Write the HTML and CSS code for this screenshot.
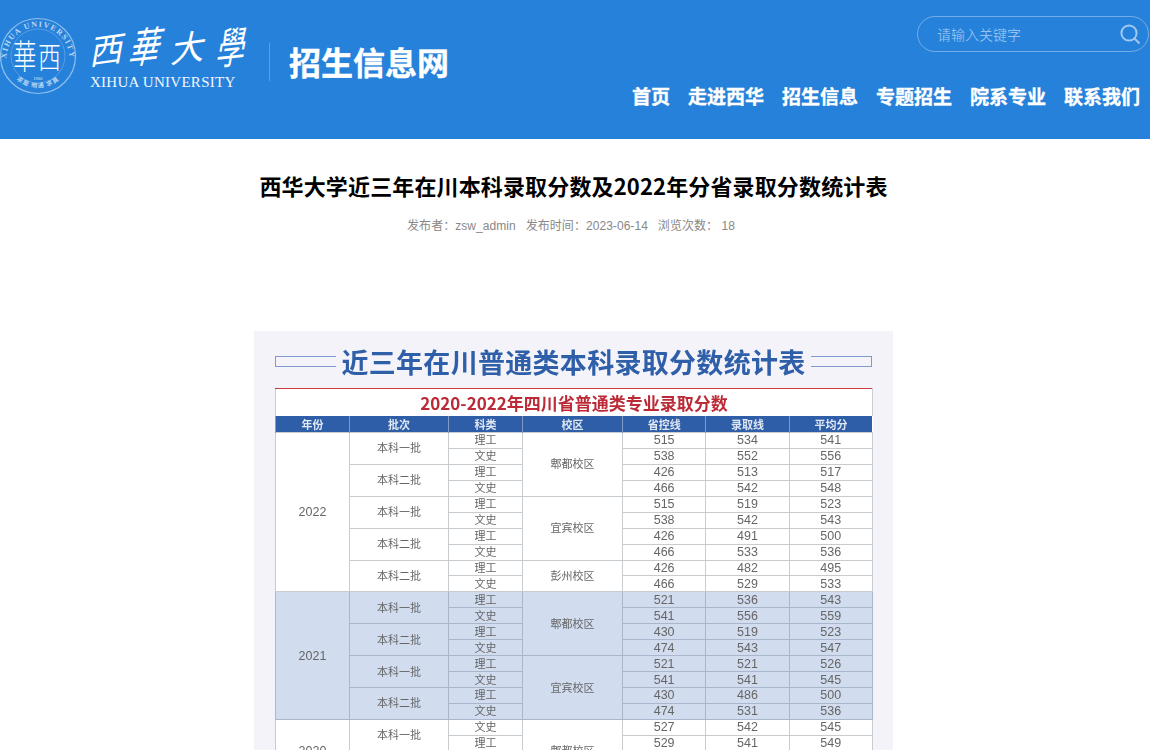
FILE: index.html
```html
<!DOCTYPE html>
<html lang="zh-CN">
<head>
    <meta charset="UTF-8">
    <meta name="viewport" content="width=device-width, initial-scale=1.0">
    <link rel="stylesheet" href="styles.css">
    <title>西华大学近三年在川本科录取分数及2022年分省录取分数统计表</title>
</head>
<body>

<header class="site-header">
    <div class="brand">
        <svg class="seal" width="80" height="80" viewBox="0 0 80 80">
            <defs>
                <path id="seal-top" d="M7 48 A31.5 31.5 0 1 1 69 48"></path>
                <path id="seal-bottom" d="M7 50 A33 33 0 0 0 69 50"></path>
            </defs>
            <circle class="seal-ring" cx="38" cy="40" r="37.5"></circle>
            <circle class="seal-ring thin" cx="38" cy="40" r="27"></circle>
            <text class="seal-name"><textPath href="#seal-top" startOffset="50%" text-anchor="middle">XIHUA UNIVERSITY</textPath></text>
            <text class="seal-motto"><textPath href="#seal-bottom" startOffset="50%" text-anchor="middle">求是 明通 求真</textPath></text>
            <text class="seal-char" transform="translate(13 53) scale(.9 1.3)">華</text>
            <text class="seal-char" transform="translate(38 52) scale(.88 1.15)">西</text>
            <text class="seal-year" x="38" y="64" text-anchor="middle">1960</text>
        </svg>
        <div class="school-name">
            <svg class="calligraphy" width="165" height="56" viewBox="0 0 165 56">
                <text transform="translate(-1 47) rotate(-8) skewX(-18)" font-size="34">西</text>
                <text transform="translate(37 46) rotate(-6) skewX(-22) scale(.9 1.2)" font-size="34">華</text>
                <text transform="translate(80 45) rotate(-8) skewX(-18)" font-size="34">大</text>
                <text transform="translate(125 47) rotate(-6) skewX(-16) scale(.85 1.25)" font-size="34">學</text>
            </svg>
            <div class="school-en">XIHUA UNIVERSITY</div>
        </div>
        <div class="site-name">招生信息网</div>
    </div>

    <div class="site-tools">
        <form class="search">
            <input type="text" placeholder="请输入关键字">
            <svg width="22" height="22" viewBox="0 0 22 22">
                <circle cx="10" cy="10" r="7.6"></circle>
                <path d="M15.5 15.5 L20.5 20.5"></path>
            </svg>
        </form>
        <nav class="main-nav">
            <a href="#">首页</a>
            <a href="#">走进西华</a>
            <a href="#">招生信息</a>
            <a href="#">专题招生</a>
            <a href="#">院系专业</a>
            <a href="#">联系我们</a>
        </nav>
    </div>
</header>

<main class="article">
    <h1>西华大学近三年在川本科录取分数及2022年分省录取分数统计表</h1>
    <p class="meta">
        <span>发布者：zsw_admin</span>
        <span>发布时间：2023-06-14</span>
        <span>浏览次数： 18</span>
    </p>

    <!-- the notice body is one big picture of a table, clipped by the window -->
    <figure class="score-sheet">
        <div class="sheet-heading">
            <i class="bracket"></i>
            <span>近三年在川普通类本科录取分数统计表</span>
            <i class="bracket right"></i>
        </div>
        <table>
            <colgroup>
                <col class="c-year"><col class="c-batch"><col class="c-type"><col class="c-campus">
                <col class="c-num"><col class="c-num"><col class="c-num">
            </colgroup>
            <thead>
                <tr class="sheet-title"><th colspan="7">2020-2022年四川省普通类专业录取分数</th></tr>
                <tr class="sheet-cols">
                    <th>年份</th><th>批次</th><th>科类</th><th>校区</th><th>省控线</th><th>录取线</th><th>平均分</th>
                </tr>
            </thead>
            <tbody>
                <tr><td class="year" rowspan="10">2022</td><td rowspan="2">本科一批</td><td>理工</td><td rowspan="4">郫都校区</td><td>515</td><td>534</td><td>541</td></tr>
                <tr><td>文史</td><td>538</td><td>552</td><td>556</td></tr>
                <tr><td rowspan="2">本科二批</td><td>理工</td><td>426</td><td>513</td><td>517</td></tr>
                <tr><td>文史</td><td>466</td><td>542</td><td>548</td></tr>
                <tr><td rowspan="2">本科一批</td><td>理工</td><td rowspan="4">宜宾校区</td><td>515</td><td>519</td><td>523</td></tr>
                <tr><td>文史</td><td>538</td><td>542</td><td>543</td></tr>
                <tr><td rowspan="2">本科二批</td><td>理工</td><td>426</td><td>491</td><td>500</td></tr>
                <tr><td>文史</td><td>466</td><td>533</td><td>536</td></tr>
                <tr><td rowspan="2">本科二批</td><td>理工</td><td rowspan="2">彭州校区</td><td>426</td><td>482</td><td>495</td></tr>
                <tr><td>文史</td><td>466</td><td>529</td><td>533</td></tr>
            </tbody>
            <tbody class="shaded">
                <tr><td class="year" rowspan="8">2021</td><td rowspan="2">本科一批</td><td>理工</td><td rowspan="4">郫都校区</td><td>521</td><td>536</td><td>543</td></tr>
                <tr><td>文史</td><td>541</td><td>556</td><td>559</td></tr>
                <tr><td rowspan="2">本科二批</td><td>理工</td><td>430</td><td>519</td><td>523</td></tr>
                <tr><td>文史</td><td>474</td><td>543</td><td>547</td></tr>
                <tr><td rowspan="2">本科一批</td><td>理工</td><td rowspan="4">宜宾校区</td><td>521</td><td>521</td><td>526</td></tr>
                <tr><td>文史</td><td>541</td><td>541</td><td>545</td></tr>
                <tr><td rowspan="2">本科二批</td><td>理工</td><td>430</td><td>486</td><td>500</td></tr>
                <tr><td>文史</td><td>474</td><td>531</td><td>536</td></tr>
            </tbody>
            <tbody>
                <tr><td class="year" rowspan="4">2020</td><td rowspan="2">本科一批</td><td>文史</td><td rowspan="4">郫都校区</td><td>527</td><td>542</td><td>545</td></tr>
                <tr><td>理工</td><td>529</td><td>541</td><td>549</td></tr>
                <tr><td colspan="5"></td></tr>
                <tr><td colspan="5"></td></tr>
            </tbody>
        </table>
    </figure>
</main>

</body>
</html>
```

FILE: styles.css
```css
html, body{
    margin: 0;
    height: 750px;
    overflow: hidden;
    background-color: #fff;
    font-family: "Liberation Sans", "Noto Sans CJK SC", sans-serif;
}

/* header */
.site-header{
    display: flex;
    justify-content: space-between;
    height: 139px;
    background-color: #2681da;
    color: #fff;
}
.brand{
    display: flex;
    align-items: flex-start;
}
.seal{
    margin: 16px 0 0 0;
    flex: none;
    overflow: visible;
}
.seal-ring{
    fill: none;
    stroke: #8fbeec;
    stroke-width: 1.2;
}
.seal-ring.thin{
    stroke: #6aa8e6;
    stroke-width: .7;
}
.seal-name{
    font-family: "Liberation Serif", serif;
    font-size: 8px;
    font-weight: bold;
    letter-spacing: 1.3px;
    fill: #bcd9f5;
}
.seal-motto{
    font-family: "Noto Sans CJK SC", sans-serif;
    font-size: 6px;
    font-weight: bold;
    letter-spacing: 1px;
    fill: #bcd9f5;
}
.seal-char{
    font-family: "Noto Sans CJK TC", sans-serif;
    font-size: 26px;
    font-weight: 300;
    fill: #fff;
}
.seal-year{
    font-family: "Liberation Sans", sans-serif;
    font-size: 4px;
    fill: #dcebfa;
}
.school-name{
    margin: 18px 0 0 10px;
    width: 170px;
}
.calligraphy{
    display: block;
    overflow: visible;
}
.calligraphy text{
    font-family: "Noto Sans CJK TC", sans-serif;
    font-weight: 400;
    fill: #fff;
}
.school-en{
    font-family: "Liberation Serif", serif;
    font-size: 15px;
    line-height: 16px;
    letter-spacing: .27px;
    color: #f2f7fd;
}
.site-name{
    margin: 43px 0 0 9px;
    padding-left: 19px;
    height: 38px;
    border-left: 1px solid rgba(255, 255, 255, .25);
    font-family: "Noto Sans CJK SC", sans-serif;
    font-size: 32px;
    font-weight: bold;
    line-height: 36px;
    -webkit-text-stroke: .4px #fff;
}
.site-tools{
    display: flex;
    flex-direction: column;
    align-items: flex-end;
    padding: 16px 1px 0 0;
}
.search{
    display: flex;
    align-items: center;
    box-sizing: border-box;
    width: 232px;
    height: 36px;
    margin: 0;
    padding: 0 7px 0 19px;
    border: 1px solid rgba(255, 255, 255, .35);
    border-radius: 18px;
}
.search input{
    flex: 1;
    min-width: 0;
    padding: 0;
    border: 0;
    outline: 0;
    background: none;
    font-family: "Noto Sans CJK SC", sans-serif;
    font-size: 14px;
    font-weight: 300;
    color: #fff;
}
.search input::placeholder{
    color: #a8cff5;
    opacity: 1;
}
.search svg{
    fill: none;
    stroke: #a0c9f2;
    stroke-width: 2;
}
.main-nav{
    display: flex;
    gap: 18px;
    margin: 31px 9px 0 0;
}
.main-nav a{
    font-family: "Noto Sans CJK SC", sans-serif;
    font-size: 19px;
    font-weight: bold;
    line-height: 26px;
    -webkit-text-stroke: .35px #fff;
    color: #fff;
    text-decoration: none;
}

/* article */
.article{
    width: 639px;
    margin-left: 254px;
}
.article h1{
    margin: 31px -20px 0;
    font-family: "Noto Sans CJK SC", sans-serif;
    font-size: 22px;
    font-weight: bold;
    line-height: 30px;
    letter-spacing: .14px;
    text-align: center;
    color: #000;
}
.meta{
    display: flex;
    justify-content: center;
    gap: 10px;
    margin: 16px 0 0;
    padding-right: 5px;
    font-size: 12px;
    line-height: 20px;
    letter-spacing: .05px;
    color: #888;
}

/* picture of the score table */
.score-sheet{
    box-sizing: border-box;
    height: 419px;
    margin: 95px 0 0;
    padding: 0 21px;
    overflow: hidden;
    background-color: #f3f3f9;
    filter: blur(.35px);
}
.sheet-heading{
    box-sizing: border-box;
    display: flex;
    align-items: center;
    gap: 5px;
    height: 57px;
    padding-top: 4px;
    font-family: "Noto Sans CJK SC", sans-serif;
    font-size: 27px;
    font-weight: bold;
    line-height: 50px;
    letter-spacing: .3px;
    white-space: nowrap;
    color: #2f5fa8;
}
.bracket{
    flex: 1;
    height: 9px;
    border: 1px solid #7f9acb;
    border-right: 0;
}
.bracket.right{
    border-left: 0;
    border-right: 1px solid #7f9acb;
}
.score-sheet table{
    width: 597px;
    table-layout: fixed;
    border-collapse: collapse;
    font-size: 11px;
    color: #666;
    background-color: #fff;
}
.c-year{ width: 74px; }
.c-batch{ width: 99px; }
.c-type{ width: 74px; }
.c-campus{ width: 100px; }
.c-num{ width: 83.3px; }
.sheet-title th{
    height: 27px;
    padding: 0;
    border-top: 1px solid #cc3a44;
    border-left: 1px solid #ccc;
    border-right: 1px solid #ccc;
    font-family: "Noto Sans CJK SC", sans-serif;
    font-size: 17px;
    line-height: 27px;
    color: #bb2a36;
}
.sheet-cols th{
    height: 16px;
    padding: 0;
    border-left: 1px solid #7f9cc8;
    background-color: #2f5ea8;
    font-family: "Noto Sans CJK SC", sans-serif;
    font-size: 11px;
    font-weight: bold;
    line-height: 16px;
    color: #dfe7f4;
}
.score-sheet td{
    box-sizing: border-box;
    height: 15.95px;
    padding: 0;
    border: 1px solid #c6ccd0;
    line-height: 14px;
    text-align: center;
    white-space: nowrap;
    overflow: hidden;
}
.score-sheet td:nth-last-child(-n+3), .score-sheet td.year{
    font-size: 12.5px;
}
.shaded{
    background-color: #d1dcef;
}
.shaded td{
    border-color: #a9b6cb;
}
```
